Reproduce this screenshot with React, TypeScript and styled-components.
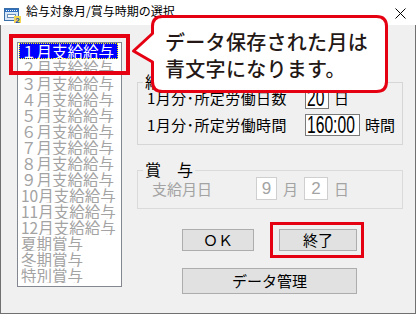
import React from 'react';
import styled, { createGlobalStyle } from 'styled-components';

const GlobalStyle = createGlobalStyle`
  html, body { margin: 0; padding: 0; background: #ffffff; }
  body {
    width: 416px; height: 314px; overflow: hidden;
    font-family: "Noto Sans CJK JP", "Noto Sans", sans-serif;
  }
  * { box-sizing: border-box; }
`;

const Window = styled.div`
  position: relative;
  width: 416px;
  height: 314px;
  display: flex;
  flex-direction: column;
`;

const TitleBar = styled.div`
  flex: none;
  height: 25px;
  background: #ffffff;
  display: flex;
  align-items: flex-start;
  padding: 0 10px 0 4px;
`;

const AppIcon = styled.svg`
  flex: none;
  margin-top: 7px;
`;

const Title = styled.div`
  flex: 1;
  margin: 5px 0 0 5px;
  font-size: 12px;
  line-height: 12px;
  color: #000000;
  white-space: nowrap;
`;

const CloseIcon = styled.svg`
  flex: none;
  margin-top: 8px;
`;

const Body = styled.div`
  flex: 1;
  background: #f0f0f0;
  border: 1px solid #707070;
  border-top: none;
  display: flex;
  align-items: flex-start;
  padding: 17px 0 0 16px;
`;

const List = styled.ul`
  position: relative;
  flex: none;
  list-style: none;
  margin: 0;
  padding: 0 3px 0 1px;
  width: 105px;
  height: 245px;
  border: 1px solid #828790;
  background: #ffffff;
`;

const Item = styled.li<{ $selected?: boolean }>`
  height: 16px;
  line-height: 16px;
  font-size: 15.5px;
  padding-left: 2px;
  white-space: nowrap;
  overflow: hidden;
  color: ${(p) => (p.$selected ? '#ffffff' : '#a3a3a3')};
  background: ${(p) => (p.$selected ? '#0000ff' : 'transparent')};
  outline: ${(p) => (p.$selected ? '1px dotted #ffff00' : 'none')};
  outline-offset: -1px;
`;

const Highlight = styled.span<{ $t: number; $l: number; $r: number; $b: number; $w: number }>`
  position: absolute;
  top: ${(p) => p.$t}px;
  left: ${(p) => p.$l}px;
  right: ${(p) => p.$r}px;
  bottom: ${(p) => p.$b}px;
  border: ${(p) => p.$w}px solid #e50012;
  pointer-events: none;
`;

const RightPane = styled.div`
  flex: none;
  width: 266px;
  margin-left: 15px;
  display: flex;
  flex-direction: column;
`;

const GroupBox = styled.div<{ $mt: number; $disabled?: boolean }>`
  position: relative;
  margin-top: ${(p) => p.$mt}px;
  border: 1px solid ${(p) => (p.$disabled ? '#dadada' : '#d6d6d6')};
`;

const GroupLabel = styled.span`
  position: absolute;
  top: -10px;
  left: 5px;
  padding: 0 2px;
  font-size: 16px;
  line-height: 16px;
  color: #000000;
  background: #f0f0f0;
  white-space: pre;
`;

const WageRows = styled.div`
  display: flex;
  flex-direction: column;
  gap: 5px;
  padding: 4px 0 8px 9px;
`;

const WageRow = styled.div`
  display: flex;
  align-items: center;
  gap: 5px;
`;

const FieldLabel = styled.span<{ $disabled?: boolean }>`
  font-size: 15px;
  line-height: 16px;
  color: ${(p) => (p.$disabled ? '#a3a3a3' : '#000000')};
  white-space: nowrap;
`;

const RowLabel = styled(FieldLabel)`
  width: 153px;
  letter-spacing: 0.4px;
`;

const NumBox = styled.div<{ $w: number }>`
  width: ${(p) => p.$w}px;
  height: 22px;
  border: 1px solid #7a7a7a;
  background: #ffffff;
  overflow: hidden;
  display: flex;
  align-items: center;
  padding-left: 1px;
`;

const NumText = styled.span`
  display: inline-block;
  font-family: "Liberation Sans", Arial, sans-serif;
  font-size: 23px;
  line-height: 22px;
  color: #000000;
  transform: scaleX(0.68);
  transform-origin: left center;
  white-space: nowrap;
`;

const BonusRow = styled.div`
  display: flex;
  align-items: center;
  gap: 6px;
  padding: 6px 0 8px 14px;
`;

const BonusLabel = styled(FieldLabel)`
  width: 98px;
`;

const SmallBox = styled.div<{ $w: number }>`
  width: ${(p) => p.$w}px;
  height: 23px;
  border: 1px solid #cfcfcf;
  background: #ffffff;
  display: flex;
  align-items: center;
  justify-content: center;
  font-family: "Liberation Sans", Arial, sans-serif;
  font-size: 17px;
  color: #a3a3a3;
`;

const ButtonArea = styled.div`
  margin: 20px 0 0 45px;
  display: flex;
  flex-direction: column;
  gap: 17px;
`;

const ButtonRow = styled.div`
  display: flex;
  gap: 25px;
`;

const ButtonWrap = styled.div`
  position: relative;
  display: flex;
`;

const Button = styled.button<{ $w: number; $h: number }>`
  width: ${(p) => p.$w}px;
  height: ${(p) => p.$h}px;
  margin: 0;
  padding: 0;
  border: 1px solid #adadad;
  background: #e1e1e1;
  font-family: "Noto Sans CJK JP", sans-serif;
  font-size: 15px;
  line-height: 16px;
  color: #000000;
`;

const Callout = styled.div`
  position: absolute;
  left: 130px;
  top: 12px;
  width: 262px;
  height: 84px;
`;

const CalloutShape = styled.svg`
  position: absolute;
  left: 0;
  top: 0;
`;

const CalloutText = styled.p`
  position: relative;
  margin: 0;
  padding: 16px 0 0 35px;
  font-size: 20px;
  line-height: 27px;
  font-weight: 500;
  letter-spacing: 0.3px;
  color: #231815;
  white-space: nowrap;
`;

const months = [
  '１月支給給与', '２月支給給与', '３月支給給与', '４月支給給与', '５月支給給与',
  '６月支給給与', '７月支給給与', '８月支給給与', '９月支給給与', '10月支給給与',
  '11月支給給与', '12月支給給与', '夏期賞与', '冬期賞与', '特別賞与',
];

export default function App() {
  return (
    <>
      <GlobalStyle />
      <Window>
        <TitleBar>
          <AppIcon width="17" height="16" viewBox="0 0 17 16">
            <rect x="0.5" y="1.5" width="14" height="12" fill="#d6e8f7" stroke="#3a6ea8" />
            <rect x="1" y="2" width="13" height="3" fill="#2f6fc0" />
            <path d="M2 3.5h1M4 3.5h1M6 3.5h1M8 3.5h1M10 3.5h1M12 3.5h1" stroke="#ffffff" />
            <rect x="3.5" y="7.5" width="8" height="3" fill="#ffffff" stroke="#6a8fb8" />
            <rect x="10" y="9" width="7" height="7" fill="#f2d64b" />
            <text x="13.5" y="15.5" fontSize="8" fontWeight="bold" fill="#1b4fb0" textAnchor="middle" fontFamily="Liberation Sans, sans-serif">2</text>
          </AppIcon>
          <Title>給与対象月/賞与時期の選択</Title>
          <CloseIcon width="11" height="11" viewBox="0 0 11 11">
            <path d="M0.5 0.5L10.5 10.5M10.5 0.5L0.5 10.5" stroke="#000000" strokeWidth="1" />
          </CloseIcon>
        </TitleBar>
        <Body>
          <List>
            {months.map((m, i) => (
              <Item key={m} $selected={i === 0}>{m}</Item>
            ))}
            <Highlight $t={-9} $l={-9} $r={-9} $b={211} $w={4} />
          </List>
          <RightPane>
            <GroupBox $mt={40}>
              <GroupLabel>給　与</GroupLabel>
              <WageRows>
                <WageRow>
                  <RowLabel>1月分･所定労働日数</RowLabel>
                  <NumBox $w={24}><NumText>20</NumText></NumBox>
                  <FieldLabel>日</FieldLabel>
                </WageRow>
                <WageRow>
                  <RowLabel>1月分･所定労働時間</RowLabel>
                  <NumBox $w={55}><NumText>160:00</NumText></NumBox>
                  <FieldLabel>時間</FieldLabel>
                </WageRow>
              </WageRows>
            </GroupBox>
            <GroupBox $mt={25} $disabled>
              <GroupLabel>賞　与</GroupLabel>
              <BonusRow>
                <BonusLabel $disabled>支給月日</BonusLabel>
                <SmallBox $w={21}>9</SmallBox>
                <FieldLabel $disabled>月</FieldLabel>
                <SmallBox $w={24}>2</SmallBox>
                <FieldLabel $disabled>日</FieldLabel>
              </BonusRow>
            </GroupBox>
            <ButtonArea>
              <ButtonRow>
                <Button $w={72} $h={22}>ＯＫ</Button>
                <ButtonWrap>
                  <Button $w={78} $h={22}>終了</Button>
                  <Highlight $t={-7} $l={-9} $r={-7} $b={-7} $w={3} />
                </ButtonWrap>
              </ButtonRow>
              <Button $w={175} $h={26}>データ管理</Button>
            </ButtonArea>
          </RightPane>
        </Body>
        <Callout>
          <CalloutShape width="262" height="84" viewBox="0 0 262 84">
            <path
              d="M32.5 4.5H246.5Q256.5 4.5 256.5 14.5V69.5Q256.5 79.5 246.5 79.5H32.5Q22.5 79.5 22.5 69.5V50L3.5 39L22.5 21.5V14.5Q22.5 4.5 32.5 4.5Z"
              fill="#ffffff"
              stroke="#e50012"
              strokeWidth="3"
              strokeLinejoin="round"
            />
          </CalloutShape>
          <CalloutText>
            データ保存された月は
            <br />
            青文字になります。
          </CalloutText>
        </Callout>
      </Window>
    </>
  );
}
